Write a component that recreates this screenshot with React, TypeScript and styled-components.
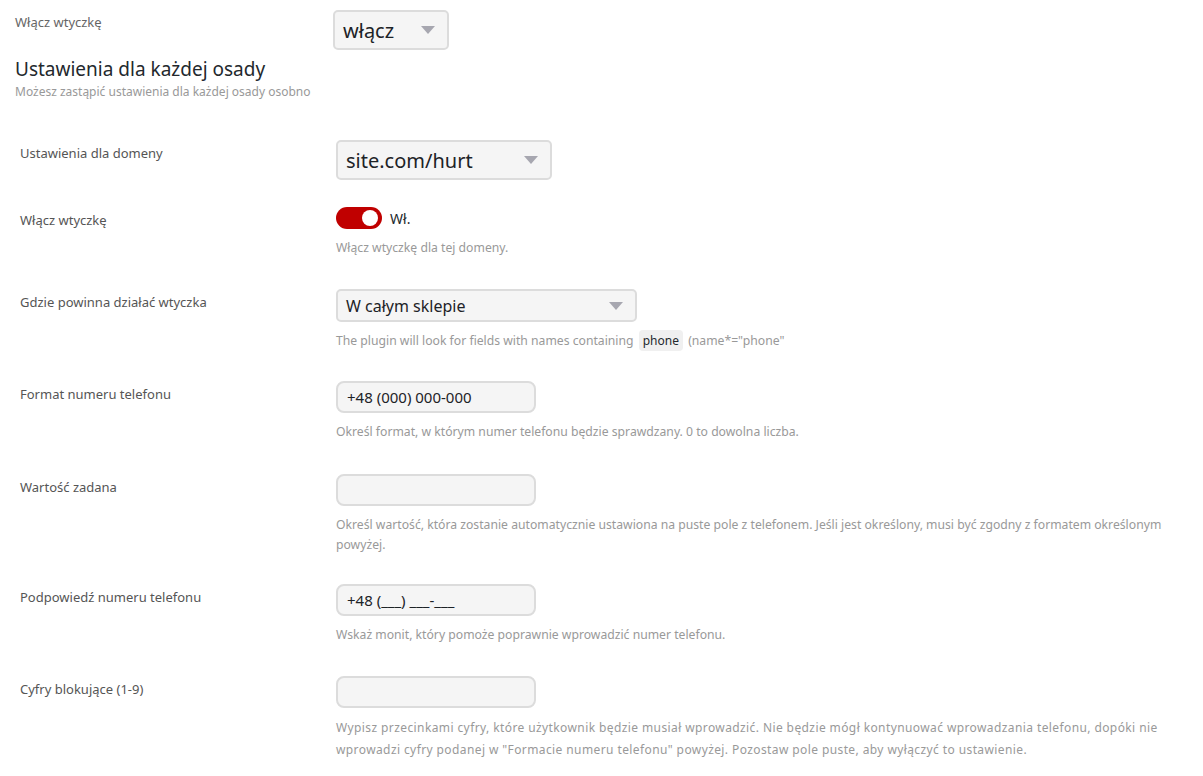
import React from "react";
import styled, { createGlobalStyle } from "styled-components";

const GlobalStyle = createGlobalStyle`
  html, body {
    margin: 0;
    padding: 0;
    background: #ffffff;
  }
  body {
    font-family: "Noto Sans", "Open Sans", sans-serif;
    color: #50575e;
  }
`;

const Page = styled.div`
  width: 1203px;
  height: 776px;
  overflow: hidden;
  padding: 10px 0 0 15px;
  box-sizing: border-box;
`;

const TopRow = styled.div`
  display: grid;
  grid-template-columns: 318px auto;
  align-items: start;
`;

const TopLabel = styled.div`
  font-size: 13px;
  line-height: 20px;
  padding-top: 2px;
  color: #666;
`;

const Heading = styled.h2`
  margin: 6px 0 0;
  font-size: 19px;
  line-height: 26px;
  font-weight: 400;
  color: #23282d;
`;

const Subtitle = styled.p`
  margin: 2px 0 0;
  font-size: 12px;
  line-height: 16px;
  color: #999;
`;

const Table = styled.div`
  margin: 25px 0 0 5px;
  display: flex;
  flex-direction: column;
`;

const Row = styled.div<{ $h: number }>`
  display: grid;
  grid-template-columns: 316px 1fr;
  height: ${(p) => p.$h}px;
  box-sizing: border-box;
  padding-top: 15px;
`;

const Label = styled.div`
  font-size: 13px;
  line-height: 20px;
  padding-top: 3px;
  color: #555;
`;

const Field = styled.div`
  display: flex;
  flex-direction: column;
  align-items: flex-start;
`;

const SelectBox = styled.div<{ $w: number; $h: number; $fs: number }>`
  width: ${(p) => p.$w}px;
  height: ${(p) => p.$h}px;
  box-sizing: border-box;
  border: 2px solid #dcdcdc;
  border-radius: 5px;
  background: #f5f5f5;
  display: flex;
  align-items: center;
  justify-content: space-between;
  padding: 0 12px 0 8px;
  font-size: ${(p) => p.$fs}px;
  color: #1d2327;
`;

const Arrow = styled.span`
  width: 0;
  height: 0;
  border-left: 7px solid transparent;
  border-right: 7px solid transparent;
  border-top: 8px solid #a7a7b0;
`;

const TextInput = styled.div`
  width: 200px;
  height: 32px;
  box-sizing: border-box;
  border: 2px solid #dcdcdc;
  border-radius: 8px;
  background: #f5f5f5;
  display: flex;
  align-items: center;
  padding: 0 9px;
  font-size: 15px;
  color: #1d2327;
`;

const Desc = styled.p<{ $spread?: boolean }>`
  margin: 9px 0 0;
  max-width: 830px;
  font-size: ${(p) => (p.$spread ? "12px" : "12.2px")};
  letter-spacing: ${(p) => (p.$spread ? "0.4px" : "0")};
  line-height: ${(p) => (p.$spread ? "22px" : "20px")};
  color: #999;
`;

const Code = styled.code`
  font-family: "Noto Sans", sans-serif;
  font-size: 12px;
  color: #23282d;
  background: #f0f0f0;
  border-radius: 4px;
  padding: 2px 4px;
  margin: 0 2px;
`;

const ToggleLine = styled.div`
  display: flex;
  align-items: center;
  gap: 8px;
  font-size: 14px;
  color: #23282d;
`;

const Toggle = styled.span`
  width: 46px;
  height: 22px;
  border-radius: 11px;
  background: #c00000;
  display: flex;
  align-items: center;
  justify-content: flex-end;
  padding: 0 4px;
  box-sizing: border-box;
`;

const Knob = styled.span`
  width: 16px;
  height: 16px;
  border-radius: 50%;
  background: #fff;
`;

const Select = ({ value, w, h, fs }: { value: string; w: number; h: number; fs: number }) => (
  <SelectBox $w={w} $h={h} $fs={fs}>
    <span>{value}</span>
    <Arrow />
  </SelectBox>
);

export default function App() {
  return (
    <Page>
      <GlobalStyle />
      <TopRow>
        <TopLabel>Włącz wtyczkę</TopLabel>
        <Select value="włącz" w={116} h={40} fs={20} />
      </TopRow>
      <Heading>Ustawienia dla każdej osady</Heading>
      <Subtitle>Możesz zastąpić ustawienia dla każdej osady osobno</Subtitle>
      <Table>
        <Row $h={67}>
          <Label>Ustawienia dla domeny</Label>
          <Field>
            <Select value="site.com/hurt" w={216} h={40} fs={20} />
          </Field>
        </Row>
        <Row $h={82}>
          <Label>Włącz wtyczkę</Label>
          <Field>
            <ToggleLine>
              <Toggle>
                <Knob />
              </Toggle>
              Wł.
            </ToggleLine>
            <Desc>Włącz wtyczkę dla tej domeny.</Desc>
          </Field>
        </Row>
        <Row $h={92}>
          <Label>Gdzie powinna działać wtyczka</Label>
          <Field>
            <Select value="W całym sklepie" w={301} h={33} fs={16} />
            <Desc>
              The plugin will look for fields with names containing <Code>phone</Code> (name*="phone"
            </Desc>
          </Field>
        </Row>
        <Row $h={93}>
          <Label>Format numeru telefonu</Label>
          <Field>
            <TextInput>+48 (000) 000-000</TextInput>
            <Desc>Określ format, w którym numer telefonu będzie sprawdzany. 0 to dowolna liczba.</Desc>
          </Field>
        </Row>
        <Row $h={110}>
          <Label>Wartość zadana</Label>
          <Field>
            <TextInput />
            <Desc>
              Określ wartość, która zostanie automatycznie ustawiona na puste pole z telefonem. Jeśli jest
              określony, musi być zgodny z formatem określonym powyżej.
            </Desc>
          </Field>
        </Row>
        <Row $h={92}>
          <Label>Podpowiedź numeru telefonu</Label>
          <Field>
            <TextInput>+48 (___) ___-___</TextInput>
            <Desc>Wskaż monit, który pomoże poprawnie wprowadzić numer telefonu.</Desc>
          </Field>
        </Row>
        <Row $h={110}>
          <Label>Cyfry blokujące (1-9)</Label>
          <Field>
            <TextInput />
            <Desc $spread>
              Wypisz przecinkami cyfry, które użytkownik będzie musiał wprowadzić. Nie będzie mógł kontynuować
              wprowadzania telefonu, dopóki nie wprowadzi cyfry podanej w "Formacie numeru telefonu" powyżej.
              Pozostaw pole puste, aby wyłączyć to ustawienie.
            </Desc>
          </Field>
        </Row>
      </Table>
    </Page>
  );
}
